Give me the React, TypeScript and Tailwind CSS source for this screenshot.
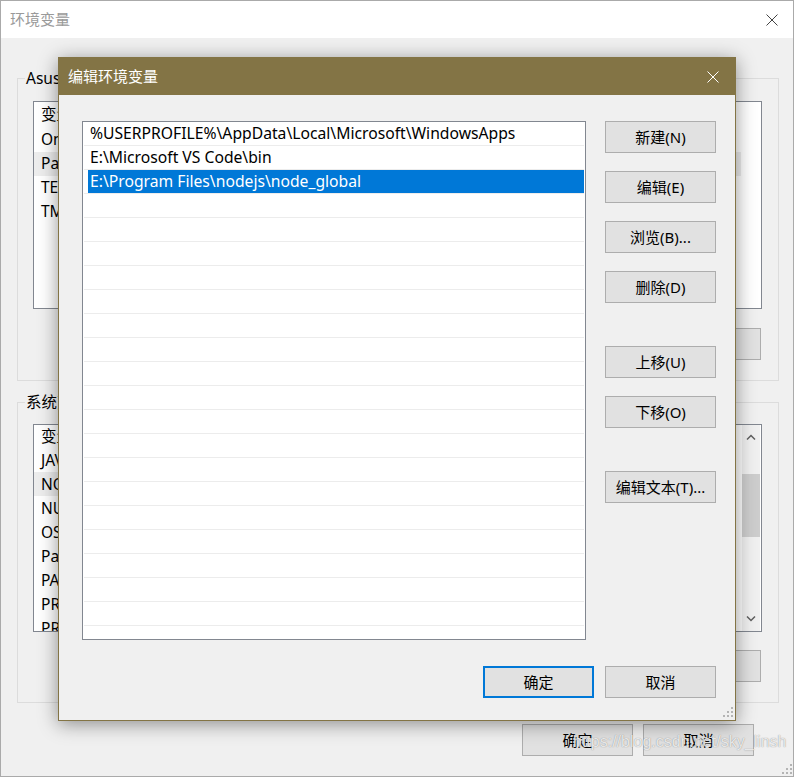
import React from 'react';

const userVars = [
  ['OneDrive', 'C:\\Users\\Asus\\OneDrive'],
  ['Path', 'E:\\Program Files\\nodejs\\node_global;...'],
  ['TEMP', '%USERPROFILE%\\AppData\\Local\\Temp'],
  ['TMP', '%USERPROFILE%\\AppData\\Local\\Temp'],
];

const sysVars = [
  ['JAVA_HOME', 'C:\\Program Files\\Java\\jdk1.8.0'],
  ['NODE_PATH', 'E:\\Program Files\\nodejs\\node_global\\node_modules'],
  ['NUMBER_OF_PROCESSORS', '8'],
  ['OS', 'Windows_NT'],
  ['Path', 'C:\\Windows\\system32;C:\\Windows;...'],
  ['PATHEXT', '.COM;.EXE;.BAT;.CMD;.VBS;.VBE;.JS'],
  ['PROCESSOR_ARCHITECTURE', 'AMD64'],
  ['PROCESSOR_IDENTIFIER', 'Intel64 Family 6 Model 142'],
];

const paths = [
  '%USERPROFILE%\\AppData\\Local\\Microsoft\\WindowsApps',
  'E:\\Microsoft VS Code\\bin',
  'E:\\Program Files\\nodejs\\node_global',
];

function CloseX({ color, size = 12 }: { color: string; size?: number }) {
  return (
    <svg width={size} height={size} viewBox="0 0 12 12">
      <path d="M0.5 0.5 L11.5 11.5 M11.5 0.5 L0.5 11.5" stroke={color} strokeWidth="1" fill="none" />
    </svg>
  );
}

function Grip() {
  return (
    <svg width="10" height="10" viewBox="0 0 10 10" fill="#b4b4b4">
      <rect x="8" y="0" width="2" height="2" />
      <rect x="4" y="4" width="2" height="2" />
      <rect x="8" y="4" width="2" height="2" />
      <rect x="0" y="8" width="2" height="2" />
      <rect x="4" y="8" width="2" height="2" />
      <rect x="8" y="8" width="2" height="2" />
    </svg>
  );
}

function Btn({
  children,
  className = '',
  primary,
}: {
  children: React.ReactNode;
  className?: string;
  primary?: boolean;
}) {
  return (
    <div
      className={`w-[111px] h-[32px] flex items-center justify-center bg-[#e1e1e1] text-[15px] text-black ${
        primary ? 'border-2 border-[#0078d7]' : 'border border-[#adadad]'
      } ${className}`}
    >
      {children}
    </div>
  );
}

function VarList({ rows, selected, scroll }: { rows: string[][]; selected: number; scroll?: boolean }) {
  return (
    <div className="ml-[15px] w-[729px] h-[208px] border border-[#828790] bg-white flex overflow-hidden">
      <div className="flex-1 flex flex-col text-[15.5px] text-black">
        <div className="h-[26px] flex items-center">
          <span className="w-[200px] pl-[7px]">变量</span>
          <span className="pl-[7px]">值</span>
        </div>
        {rows.map((r, i) => (
          <div
            key={r[0]}
            className={`h-[24px] shrink-0 flex items-center mr-[20px] ${i === selected ? 'bg-[#ededed]' : ''}`}
          >
            <span className="w-[200px] pl-[7px]">{r[0]}</span>
            <span className="pl-[7px]">{r[1]}</span>
          </div>
        ))}
      </div>
      {scroll && (
        <div className="w-[18px] mr-[1px] flex flex-col items-center bg-[#f0f0f0]">
          <div className="h-[24px] flex items-center justify-center">
            <svg width="10" height="6" viewBox="0 0 10 6">
              <path d="M1 5.5 L5 1.5 L9 5.5" stroke="#606060" strokeWidth="1.5" fill="none" />
            </svg>
          </div>
          <div className="mt-[25px] w-full h-[63px] bg-[#cdcdcd]" />
          <div className="flex-1" />
          <div className="h-[24px] flex items-center justify-center">
            <svg width="10" height="6" viewBox="0 0 10 6">
              <path d="M1 0.5 L5 4.5 L9 0.5" stroke="#606060" strokeWidth="1.5" fill="none" />
            </svg>
          </div>
        </div>
      )}
    </div>
  );
}

function GroupButtons() {
  return (
    <div className="flex justify-end gap-[10px] mr-[17px]">
      <Btn>新建(N)...</Btn>
      <Btn>编辑(E)...</Btn>
      <Btn>删除(D)</Btn>
    </div>
  );
}

function EditDialog() {
  return (
    <div className="absolute left-[57px] top-[56px] w-[678px] h-[664px] border border-[#837445] bg-[#f0f0f0] shadow-[0_3px_18px_rgba(0,0,0,0.42)] flex flex-col">
      <div className="h-[37px] shrink-0 bg-[#837445] flex items-center justify-between pl-[9px] pr-[16px]">
        <span className="text-[15px] text-white">编辑环境变量</span>
        <CloseX color="#ffffff" size={12} />
      </div>
      <div className="flex pl-[23px] pt-[26px]">
        <div className="w-[504px] h-[519px] border border-[#828790] bg-white overflow-hidden flex flex-col px-[1px]">
          {Array.from({ length: 22 }).map((_, i) => {
            const text = paths[i];
            const sel = i === 2;
            return (
              <div key={i} className="h-[24px] shrink-0 border-b border-[#ececec] flex">
                <div
                  className={`flex-1 flex items-center pt-[1px] text-[15.7px] ${
                    sel ? 'ml-[4px] bg-[#0078d7] text-white pl-[2px]' : 'pl-[6px] text-black'
                  }`}
                >
                  {text}
                </div>
              </div>
            );
          })}
        </div>
        <div className="ml-[19px] flex flex-col">
          <Btn>新建(N)</Btn>
          <Btn className="mt-[18px]">编辑(E)</Btn>
          <Btn className="mt-[18px]">浏览(B)...</Btn>
          <Btn className="mt-[18px]">删除(D)</Btn>
          <Btn className="mt-[43px]">上移(U)</Btn>
          <Btn className="mt-[18px]">下移(O)</Btn>
          <Btn className="mt-[43px]">编辑文本(T)...</Btn>
        </div>
      </div>
      <div className="flex justify-end gap-[11px] pr-[19px] mt-[26px]">
        <Btn primary>确定</Btn>
        <Btn>取消</Btn>
      </div>
      <div className="absolute right-[2px] bottom-[3px]">
        <Grip />
      </div>
    </div>
  );
}

export default function App() {
  return (
    <div className="relative w-[794px] h-[777px] overflow-hidden border border-[#aaaaaa] bg-[#f0f0f0] font-['Noto_Sans','Noto_Sans_CJK_SC',sans-serif]">
      <div className="h-[37px] bg-white flex items-center justify-between pl-[9px] pr-[15px]">
        <span className="text-[15px] text-[#9a9a9a]">环境变量</span>
        <CloseX color="#444444" size={12} />
      </div>
      <div className="pl-[16px] pr-[14px] pt-[30px]">
        <fieldset className="border border-[#dcdcdc] pb-[20px]">
          <legend className="ml-[7px] px-[1px] text-[15.5px] leading-[20px] text-black">Asus 的用户变量(U)</legend>
          <div className="mt-[13px]">
            <VarList rows={userVars} selected={1} />
          </div>
          <div className="mt-[19px]">
            <GroupButtons />
          </div>
        </fieldset>
        <fieldset className="mt-[11px] border border-[#dcdcdc] pb-[20px]">
          <legend className="ml-[7px] px-[1px] text-[15.5px] leading-[20px] text-black">系统变量(S)</legend>
          <div className="mt-[12px]">
            <VarList rows={sysVars} selected={1} scroll />
          </div>
          <div className="mt-[18px]">
            <GroupButtons />
          </div>
        </fieldset>
        <div className="mt-[21px] flex justify-end gap-[10px] pr-[25px]">
          <Btn>确定</Btn>
          <Btn>取消</Btn>
        </div>
      </div>
      <EditDialog />
      <div className="absolute left-[572px] top-[729px] text-[16px] font-['Liberation_Sans',sans-serif] text-white/80 [text-shadow:0_0_1px_rgba(90,90,90,0.8)]">
        https://blog.csdn.net/sky_linsh
      </div>
      <div className="absolute right-[1px] bottom-[2px]">
        <Grip />
      </div>
    </div>
  );
}
